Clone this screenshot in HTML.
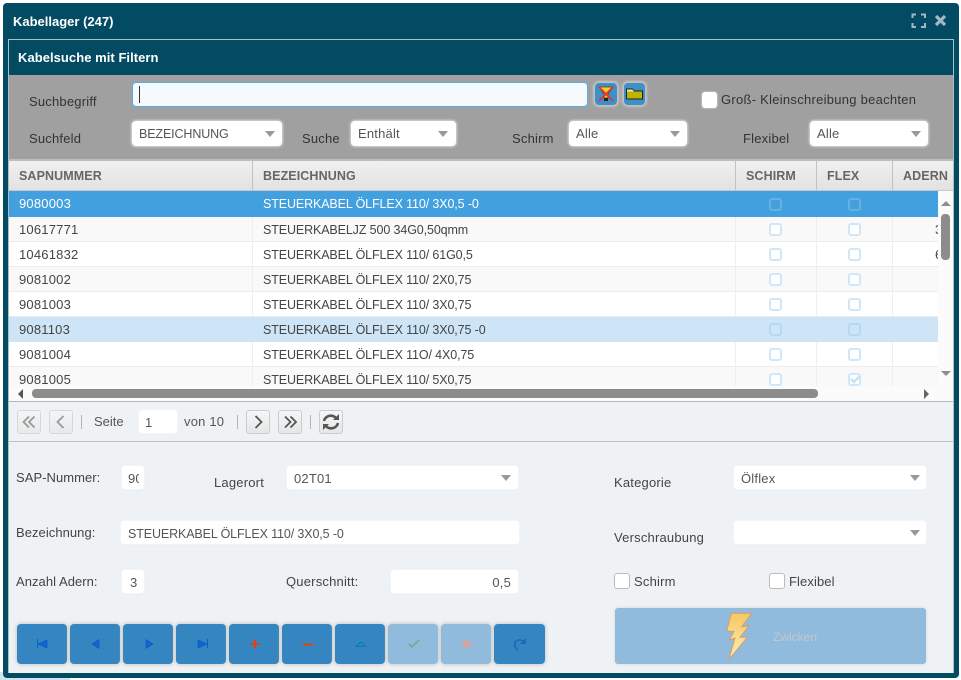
<!DOCTYPE html>
<html><head><meta charset="utf-8">
<style>
html,body{margin:0;padding:0;background:#fff;width:961px;height:680px;overflow:hidden}
*{box-sizing:border-box}
body{font-family:"Liberation Sans",sans-serif;font-size:13px;color:#444;position:relative}
.a{position:absolute;white-space:nowrap}
.t{position:absolute;white-space:nowrap;line-height:16px;letter-spacing:.2px}
.sel{position:absolute;background:#fff;border-radius:4px;height:25px;line-height:26px;padding-left:7px;color:#555;letter-spacing:.2px;white-space:nowrap}
.u{font-size:12.5px;letter-spacing:-.12px}
.glow{box-shadow:0 0 2px 1px #d8d8d8}
.form{border:1px solid #f3f5f6;box-shadow:0 0 1px #e6e9eb}
.arr{position:absolute;width:0;height:0;border-left:5.5px solid transparent;border-right:5.5px solid transparent;border-top:6px solid #999}
.row{position:absolute;left:0;width:929px;height:25px;border-bottom:1px solid #ececec;background:#fff;color:#444}
.row.o{background:#f9f9f9}
.row span{position:absolute;top:5px;line-height:16px;letter-spacing:.2px;white-space:nowrap}
.row span.u{letter-spacing:-.12px}
.row i{position:absolute;top:0;bottom:-1px;width:1px;background:#eee}
.row b{position:absolute;top:6px;width:13px;height:13px;border:2px solid #d0e7f7;border-radius:3px;background:#fff}
.row.s1{background:#42a0df;color:#fff;border-color:#42a0df}
.row.s1 i{background:transparent}
.row.s1 b{background:#42a0df;border-color:#66b0e4}
.row.s2{background:#cde5f7;border-color:#cde5f7}
.row.s2 i{background:transparent}
.row.s2 b{background:#cde5f7;border-color:#b5d9ef}
.th{position:absolute;top:169px;font-weight:bold;color:#666;font-size:12.5px;line-height:15px;letter-spacing:.1px;white-space:nowrap}
.ts{position:absolute;top:161px;width:1px;height:29px;background:#bcc3cb}
.pb{position:absolute;top:410px;width:24px;height:24px;border:1px solid #ccc;border-radius:3px;background:linear-gradient(#f6f6f6,#e4e6e7)}
.sp{position:absolute;top:415px;width:1px;height:14px;background:#b5b5b5}
.nb{position:absolute;top:624px;width:50px;height:40px;background:#3586c0;border-radius:4px;box-shadow:0 0 3px 1px #ccc}
.nb.d{background:#90bbdc}
.nb svg{position:absolute;left:0;top:0}
.cb{position:absolute;width:16px;height:16px;background:#fff;border:1px solid #bbb;border-radius:3px}
</style></head><body>
<div class="a" style="left:0;top:672px;width:70px;height:8px;background:#cfe2ee"></div>
<div class="a" style="left:3px;top:3px;width:956px;height:675px;background:#034a63;border-radius:4px"></div>
<div class="t" style="left:13px;top:14px;color:#fff;font-weight:bold;font-size:13px;letter-spacing:0">Kabellager (247)</div>
<svg class="a" style="left:911px;top:13px" width="40" height="16" viewBox="0 0 40 16"><path d="M1.500 5V1.500H5M10 1.500h4V5M14 10v4h-4M5 14H1.500V10" fill="none" stroke="#a3b9c2" stroke-width="2"/><path d="M25 3l9 9M34 3l-9 9" stroke="#a3b9c2" stroke-width="3.200" fill="none"/></svg>

<div class="a" style="left:8px;top:39px;width:946px;height:634px;border:1px solid #a9c0ca;border-bottom:0;background:#eef2f4"></div>
<div class="a" style="left:9px;top:40px;width:944px;height:35px;background:#034a63"></div>
<div class="t" style="left:18px;top:50px;color:#fff;font-weight:bold;font-size:13px;letter-spacing:.05px">Kabelsuche mit Filtern</div>

<div class="a" style="left:9px;top:75px;width:944px;height:84px;background:#a0a0a0"></div>
<div class="a" style="left:9px;top:159px;width:944px;height:2px;background:#b9bfc6"></div>
<div class="t" style="left:29px;top:94px;color:#333">Suchbegriff</div>
<div class="a" style="left:132px;top:82px;width:456px;height:25px;background:#f5faff;border:1px solid #58ace4;border-radius:4px"></div>
<div class="a" style="left:139px;top:86px;width:1px;height:17px;background:#333"></div>

<div class="a" style="left:595px;top:83px;width:22px;height:22px;background:#3f8fc9;border-radius:4px;box-shadow:0 0 2px 2px #c4c4c4"></div>
<svg class="a" style="left:596px;top:84px" width="20" height="20" viewBox="0 0 20 20"><path d="M3 3h14l-5 7v4H8v-4z" fill="#f2d21f" stroke="#5a4a00" stroke-width=".8"/><path d="M8 14h4v3H8z" fill="#222"/><path d="M3 3l14 14M17 3L3 17" stroke="#ee2b3a" stroke-width="1.600"/></svg>
<div class="a" style="left:624px;top:83px;width:21px;height:22px;background:#3f8fc9;border-radius:4px;box-shadow:0 0 2px 2px #c4c4c4"></div>
<svg class="a" style="left:625px;top:86px" width="19" height="15" viewBox="0 0 19 15"><path d="M1.500 13V3h6L9 5h8.500v8z" fill="#bdb400" stroke="#222" stroke-width="1"/><path d="M2 3.500h5.500L9 5.500H2z" fill="#eee8a0"/></svg>

<div class="a" style="left:702px;top:92px;width:15px;height:16px;background:#fff;border-radius:3px;box-shadow:0 0 1px 1px #bbb"></div>
<div class="t" style="left:721px;top:92px;color:#333;letter-spacing:.27px">Groß- Kleinschreibung beachten</div>

<div class="t" style="left:29px;top:131px;color:#333">Suchfeld</div>
<div class="sel glow" style="left:132px;top:121px;width:150px"><span class="u">BEZEICHNUNG</span></div><div class="arr" style="left:265px;top:131px"></div>
<div class="t" style="left:302px;top:131px;color:#333">Suche</div>
<div class="sel glow" style="left:351px;top:121px;width:105px">Enthält</div><div class="arr" style="left:438px;top:131px"></div>
<div class="t" style="left:512px;top:131px;color:#333">Schirm</div>
<div class="sel glow" style="left:569px;top:121px;width:118px">Alle</div><div class="arr" style="left:670px;top:131px"></div>
<div class="t" style="left:743px;top:131px;color:#333">Flexibel</div>
<div class="sel glow" style="left:810px;top:121px;width:118px">Alle</div><div class="arr" style="left:911px;top:131px"></div>

<div class="a" style="left:9px;top:161px;width:944px;height:30px;background:linear-gradient(#f0f0f0,#e2e2e2);border-bottom:1px solid #c6c9cc"></div>
<div class="th" style="left:19px">SAPNUMMER</div>
<div class="th" style="left:263px">BEZEICHNUNG</div>
<div class="th" style="left:746px">SCHIRM</div>
<div class="th" style="left:827px">FLEX</div>
<div class="th" style="left:903px">ADERN</div>
<div class="ts" style="left:252px"></div><div class="ts" style="left:735px"></div><div class="ts" style="left:816px"></div><div class="ts" style="left:892px"></div>

<div class="a" style="left:9px;top:191px;width:944px;height:211px;background:#fafafa"></div>
<div class="a" style="left:9px;top:191px;width:944px;height:195px;overflow:hidden">
<div class="row s1" style="top:0;height:26px"><span style="left:10px">9080003</span><span class="u" style="left:254px">STEUERKABEL ÖLFLEX 110/ 3X0,5 -0</span><b style="left:760px;top:7px"></b><b style="left:839px;top:7px"></b></div>
<div class="row o" style="top:26px"><i style="left:243px"></i><i style="left:726px"></i><i style="left:807px"></i><i style="left:883px"></i><span style="left:10px">10617771</span><span class="u" style="left:254px">STEUERKABELJZ 500 34G0,50qmm</span><b style="left:760px"></b><b style="left:839px"></b><span style="left:926px">3</span></div>
<div class="row" style="top:51px"><i style="left:243px"></i><i style="left:726px"></i><i style="left:807px"></i><i style="left:883px"></i><span style="left:10px">10461832</span><span class="u" style="left:254px">STEUERKABEL ÖLFLEX 110/ 61G0,5</span><b style="left:760px"></b><b style="left:839px"></b><span style="left:926px">6</span></div>
<div class="row o" style="top:76px"><i style="left:243px"></i><i style="left:726px"></i><i style="left:807px"></i><i style="left:883px"></i><span style="left:10px">9081002</span><span class="u" style="left:254px">STEUERKABEL ÖLFLEX 110/ 2X0,75</span><b style="left:760px"></b><b style="left:839px"></b></div>
<div class="row" style="top:101px"><i style="left:243px"></i><i style="left:726px"></i><i style="left:807px"></i><i style="left:883px"></i><span style="left:10px">9081003</span><span class="u" style="left:254px">STEUERKABEL ÖLFLEX 110/ 3X0,75</span><b style="left:760px"></b><b style="left:839px"></b></div>
<div class="row s2" style="top:126px;height:26px"><span style="left:10px">9081103</span><span class="u" style="left:254px">STEUERKABEL ÖLFLEX 110/ 3X0,75 -0</span><b style="left:760px"></b><b style="left:839px"></b></div>
<div class="row" style="top:151px"><i style="left:243px"></i><i style="left:726px"></i><i style="left:807px"></i><i style="left:883px"></i><span style="left:10px">9081004</span><span class="u" style="left:254px">STEUERKABEL ÖLFLEX 11O/ 4X0,75</span><b style="left:760px"></b><b style="left:839px"></b></div>
<div class="row o" style="top:176px;border:0"><i style="left:243px"></i><i style="left:726px"></i><i style="left:807px"></i><i style="left:883px"></i><span style="left:10px">9081005</span><span class="u" style="left:254px">STEUERKABEL ÖLFLEX 110/ 5X0,75</span><b style="left:760px"></b><b style="left:839px"></b><svg class="a" style="left:840px;top:7px" width="13" height="11" viewBox="0 0 13 11"><path d="M2 5l3 3 6-6" fill="none" stroke="#c5e2f5" stroke-width="2.400"/></svg></div>
</div>

<!-- scrollbars -->
<div class="a" style="left:938px;top:191px;width:15px;height:195px;background:#fbfbfb"></div>
<div class="a" style="left:941px;top:201px;width:0;height:0;border-left:5px solid transparent;border-right:5px solid transparent;border-bottom:5px solid #8e8e8e"></div>
<div class="a" style="left:941px;top:214px;width:9px;height:46px;background:#8c8c8c;border-radius:4px"></div>
<div class="a" style="left:941px;top:371px;width:0;height:0;border-left:5px solid transparent;border-right:5px solid transparent;border-top:5px solid #8e8e8e"></div>
<div class="a" style="left:9px;top:386px;width:944px;height:15px;background:#fbfbfb"></div>
<div class="a" style="left:18px;top:389px;width:0;height:0;border-top:5px solid transparent;border-bottom:5px solid transparent;border-right:5px solid #555"></div>
<div class="a" style="left:32px;top:389px;width:786px;height:9px;background:#8c8c8c;border-radius:4px"></div>
<div class="a" style="left:924px;top:389px;width:0;height:0;border-top:5px solid transparent;border-bottom:5px solid transparent;border-left:5px solid #666"></div>
<div class="a" style="left:9px;top:401px;width:944px;height:1px;background:#b5b8ba"></div>

<!-- pager -->
<div class="a" style="left:9px;top:402px;width:944px;height:40px;background:#eff2f4;border-bottom:1px solid #bcc0c3"></div>
<div class="pb" style="left:17px;opacity:.7"></div>
<svg class="a" style="left:17px;top:410px" width="24" height="24"><path d="M12 6.500L6.500 12l5.500 5.500M17.500 6.500L12 12l5.500 5.500" fill="none" stroke="#999" stroke-width="1.800"/></svg>
<div class="pb" style="left:49px;opacity:.7"></div>
<svg class="a" style="left:49px;top:410px" width="24" height="24"><path d="M14.500 6l-6 6 6 6" fill="none" stroke="#999" stroke-width="1.800"/></svg>
<div class="sp" style="left:81px"></div>
<div class="t" style="left:94px;top:414px;color:#555;letter-spacing:0">Seite</div>
<div class="a" style="left:138px;top:409px;width:40px;height:25px;background:#fff;border:1px solid #f3f3f3;border-radius:4px;line-height:26px;padding-left:6px;color:#555">1</div>
<div class="t" style="left:184px;top:414px;color:#555">von 10</div>
<div class="sp" style="left:237px"></div>
<div class="pb" style="left:246px"></div>
<svg class="a" style="left:246px;top:410px" width="24" height="24"><path d="M9.500 6l6 6-6 6" fill="none" stroke="#555" stroke-width="1.800"/></svg>
<div class="pb" style="left:278px"></div>
<svg class="a" style="left:278px;top:410px" width="24" height="24"><path d="M7 6.500l5.500 5.500L7 17.500M12.500 6.500L18 12l-5.500 5.500" fill="none" stroke="#555" stroke-width="1.800"/></svg>
<div class="sp" style="left:310px"></div>
<div class="pb" style="left:319px"></div>
<svg class="a" style="left:319px;top:410px" width="24" height="24" viewBox="0 0 24 24"><path d="M5 11a7 7 0 0 1 12-3" fill="none" stroke="#555" stroke-width="2.600"/><path d="M14 10h6V4z" fill="#555"/><path d="M19 13a7 7 0 0 1-12 3" fill="none" stroke="#555" stroke-width="2.600"/><path d="M10 14H4v6z" fill="#555"/></svg>

<!-- form -->
<div class="t" style="left:16px;top:470px;color:#444;letter-spacing:.05px">SAP-Nummer:</div>
<div class="sel form" style="left:121px;top:465px;width:24px;padding:0"><span style="position:absolute;left:6px;top:0;width:11px;overflow:hidden">90</span></div>
<div class="t" style="left:214px;top:475px;color:#444">Lagerort</div>
<div class="sel form" style="left:286px;top:465px;width:233px">02T01</div><div class="arr" style="left:501px;top:475px"></div>
<div class="t" style="left:614px;top:475px;color:#444">Kategorie</div>
<div class="sel form" style="left:733px;top:465px;width:194px">Ölflex</div><div class="arr" style="left:910px;top:475px"></div>

<div class="t" style="left:16px;top:525px;color:#444;letter-spacing:.05px">Bezeichnung:</div>
<div class="sel form" style="left:120px;top:520px;width:400px"><span class="u">STEUERKABEL ÖLFLEX 110/ 3X0,5 -0</span></div>
<div class="t" style="left:614px;top:530px;color:#444;letter-spacing:.2px">Verschraubung</div>
<div class="sel form" style="left:733px;top:520px;width:194px"></div><div class="arr" style="left:910px;top:530px"></div>

<div class="t" style="left:16px;top:574px;color:#444;letter-spacing:.05px">Anzahl Adern:</div>
<div class="sel form" style="left:121px;top:569px;width:24px;padding-left:8px">3</div>
<div class="t" style="left:286px;top:574px;color:#444">Querschnitt:</div>
<div class="sel form" style="left:390px;top:569px;width:129px;text-align:right;padding:0 7px 0 0">0,5</div>
<div class="cb" style="left:614px;top:573px"></div>
<div class="t" style="left:634px;top:574px;color:#444">Schirm</div>
<div class="cb" style="left:769px;top:573px"></div>
<div class="t" style="left:789px;top:574px;color:#444;letter-spacing:.1px">Flexibel</div>

<!-- nav -->
<div class="nb" style="left:17px"><svg width="50" height="40"><path d="M20.500 15v9" stroke="#0a5fd0" stroke-width="1"/><path d="M21 20l9-4v8z" fill="#0e66d8" stroke="#0a55b0" stroke-width=".6"/></svg></div>
<div class="nb" style="left:70px"><svg width="50" height="40"><path d="M22 20l7-4.500v9z" fill="#0e66d8" stroke="#0a55b0" stroke-width=".6"/></svg></div>
<div class="nb" style="left:123px"><svg width="50" height="40"><path d="M30 20l-7-4.500v9z" fill="#0e66d8" stroke="#0a55b0" stroke-width=".6"/></svg></div>
<div class="nb" style="left:176px"><svg width="50" height="40"><path d="M31.500 15v9" stroke="#0a5fd0" stroke-width="1"/><path d="M31 20l-9-4v8z" fill="#0e66d8" stroke="#0a55b0" stroke-width=".6"/></svg></div>
<div class="nb" style="left:229px"><svg width="50" height="40"><path d="M26 15.500v9M21.500 20h9" stroke="#e8400a" stroke-width="2"/></svg></div>
<div class="nb" style="left:282px"><svg width="50" height="40"><path d="M21 20.500h10" stroke="#e8400a" stroke-width="2"/></svg></div>
<div class="nb" style="left:335px"><svg width="50" height="40"><path d="M21 22.500l5-4.500 5 4.500z" fill="#1590c8" stroke="#0b6f9f" stroke-width=".7"/></svg></div>
<div class="nb d" style="left:388px"><svg width="50" height="40"><path d="M21 20l3 3 7-7" fill="none" stroke="#7fa793" stroke-width="1.800"/></svg></div>
<div class="nb d" style="left:441px"><svg width="50" height="40"><path d="M22 16l8 8M30 16l-8 8" fill="none" stroke="#ec9a80" stroke-width="1.800"/></svg></div>
<div class="nb" style="left:494px;width:51px"><svg width="51" height="40"><path d="M24 26c-3-2-4-5-3-7 1-3 5-4 8-2" fill="none" stroke="#1769bf" stroke-width="1.600"/><path d="M32 14v6h-6z" fill="#1769bf"/></svg></div>

<!-- Zwicken -->
<div class="a" style="left:615px;top:608px;width:311px;height:56px;background:#90bbdc;border-radius:3px;box-shadow:0 0 2px 1px #dfe3e5"></div>
<svg class="a" style="left:725px;top:612px" width="28" height="48" viewBox="0 0 28 48"><defs><linearGradient id="l" x1="0" y1="0" x2="0" y2="1"><stop offset="0" stop-color="#f6c860"/><stop offset="1" stop-color="#fdeeb4"/></linearGradient></defs><path d="M6.300 1.300H26.700L16.700 14.700 24 13.700 15 25.300H22.300L4 47.300 10 26 4.300 28 9 19.500 1.700 19z" fill="url(#l)" stroke="#d79d70" stroke-width="1"/></svg>
<div class="t" style="left:773px;top:629px;color:#c3c9cc;font-size:12px;letter-spacing:0">Zwicken</div>
</body></html>
